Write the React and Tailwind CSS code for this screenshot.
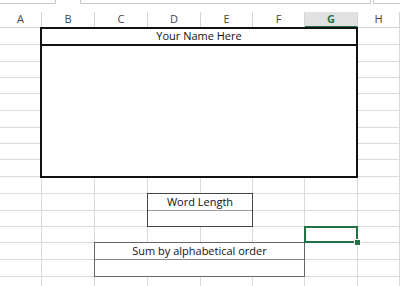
import React from 'react';

const cols = ['A', 'B', 'C', 'D', 'E', 'F', 'G', 'H'];
const colWidths = [42, 53, 53, 53, 52, 52, 53, 42];
// row heights in px, bottom gridline included
const rowHeights = [17, 17, 16, 16, 17, 17, 16, 16, 17, 17, 17, 16, 16, 17, 17, 17];

const App = () => {
  return (
    <div className="w-[400px] h-[286px] overflow-hidden bg-white" style={{ fontFamily: '"Open Sans", "Noto Sans", sans-serif' }}>
      {/* formula bar remains */}
      <div className="flex h-[12px] items-start">
        <div className="w-[56px] h-[4px] border-r border-b border-[#c6c6c6]" />
        <div className="ml-[24px] w-[291px] h-[4px] border-l border-r border-b border-[#c6c6c6]" />
        <div className="ml-[2px] flex-1 h-[4px] border-l border-b border-[#c6c6c6]" />
      </div>

      <div
        className="grid"
        style={{
          gridTemplateColumns: colWidths.map((w) => `${w}px`).join(' '),
          gridTemplateRows: `16px ${rowHeights.map((h) => `${h}px`).join(' ')}`,
        }}
      >
        {/* column headers */}
        {cols.map((c, i) => (
          <div
            key={c}
            style={{ gridRow: 1, gridColumn: i + 1 }}
            className={
              c === 'G'
                ? 'flex items-center justify-center border-r border-[#d4d4d4] bg-[#e1e1e1] border-b-2 border-b-[#217346] text-[11px] font-bold text-[#217346]'
                : 'flex items-center justify-center border-r border-b border-[#d4d4d4] text-[11px] text-[#444]'
            }
          >
            {c}
          </div>
        ))}

        {/* cells */}
        {rowHeights.map((_, r) =>
          cols.map((c, i) => (
            <div
              key={`${c}${r}`}
              style={{ gridRow: r + 2, gridColumn: i + 1 }}
              className="border-r border-b border-[#dadada]"
            />
          ))
        )}

        {/* name block B1:G9 */}
        <div className="col-start-2 col-end-8 row-start-2 row-end-11 -ml-[2px] -mt-[1px] -mb-[1px] flex flex-col border-2 border-[#111]">
          <div className="h-[17px] flex items-center justify-center border-b-2 border-[#111] bg-white text-[11px] text-[#111]">
            Your Name Here
          </div>
          <div className="flex-1 bg-white" />
        </div>

        {/* Word Length D12:E13 */}
        <div className="col-start-4 col-end-6 row-start-12 row-end-14 -ml-px -mt-px flex flex-col border border-[#444]">
          <div className="h-[17px] flex items-center justify-center border-b border-[#9a9a9a] bg-white text-[11px] text-[#111]">
            Word Length
          </div>
          <div className="flex-1 bg-white" />
        </div>

        {/* Sum by alphabetical order C15:F16 */}
        <div className="col-start-3 col-end-7 row-start-15 row-end-17 -ml-px -mt-px flex flex-col border border-[#666]">
          <div className="h-[17px] flex items-center justify-center border-b border-[#888] bg-white text-[11px] text-[#111]">
            Sum by alphabetical order
          </div>
          <div className="flex-1 bg-white" />
        </div>

        {/* selected cell G14 */}
        <div className="relative col-start-7 col-end-8 row-start-14 row-end-15 -ml-px -mt-px border-2 border-[#217346]">
          <div className="absolute -right-[4px] -bottom-[4px] w-[5px] h-[5px] bg-[#217346] outline outline-1 outline-white" />
        </div>
      </div>
    </div>
  );
};

export default App;
